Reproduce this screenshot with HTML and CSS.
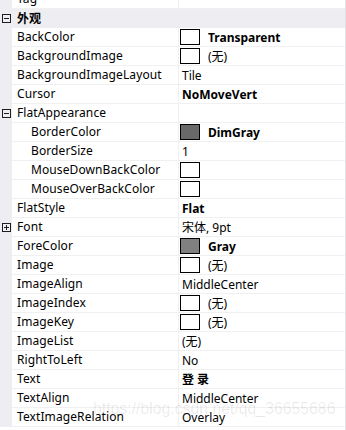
FILE: index.html
```html
<!DOCTYPE html>
<html lang="zh-CN">
<head>
    <meta charset="UTF-8">
    <meta name="viewport" content="width=device-width, initial-scale=1.0">
    <title>属性</title>
    <link rel="stylesheet" href="styles.css">
</head>
<body>
    <div class="grid">
        <div class="row"><span class="gutter"></span><span class="name">Tag</span><span class="value"></span></div>

        <!-- 外观 -->
        <div class="row cat">
            <span class="gutter"><svg class="toggle" viewBox="0 0 9 9"><rect x="0.5" y="0.5" width="8" height="8"/><path d="M2 4.5h5"/></svg></span>
            <span class="name">外观</span>
        </div>
        <div class="row"><span class="gutter"></span><span class="name">BackColor</span><span class="value"><i class="swatch"></i><b>Transparent</b></span></div>
        <div class="row"><span class="gutter"></span><span class="name">BackgroundImage</span><span class="value"><i class="swatch"></i>(无)</span></div>
        <div class="row"><span class="gutter"></span><span class="name">BackgroundImageLayout</span><span class="value">Tile</span></div>
        <div class="row"><span class="gutter"></span><span class="name">Cursor</span><span class="value"><b>NoMoveVert</b></span></div>
        <div class="row">
            <span class="gutter"><svg class="toggle" viewBox="0 0 9 9"><rect x="0.5" y="0.5" width="8" height="8"/><path d="M2 4.5h5"/></svg></span>
            <span class="name">FlatAppearance</span><span class="value"></span>
        </div>
        <div class="row"><span class="gutter"></span><span class="name sub">BorderColor</span><span class="value"><i class="swatch dimgray"></i><b>DimGray</b></span></div>
        <div class="row"><span class="gutter"></span><span class="name sub">BorderSize</span><span class="value">1</span></div>
        <div class="row"><span class="gutter"></span><span class="name sub">MouseDownBackColor</span><span class="value"><i class="swatch"></i></span></div>
        <div class="row"><span class="gutter"></span><span class="name sub">MouseOverBackColor</span><span class="value"><i class="swatch"></i></span></div>
        <div class="row"><span class="gutter"></span><span class="name">FlatStyle</span><span class="value"><b>Flat</b></span></div>
        <div class="row">
            <span class="gutter"><svg class="toggle" viewBox="0 0 9 9"><rect x="0.5" y="0.5" width="8" height="8"/><path d="M2 4.5h5M4.5 2v5"/></svg></span>
            <span class="name">Font</span><span class="value">宋体, 9pt</span>
        </div>
        <div class="row"><span class="gutter"></span><span class="name">ForeColor</span><span class="value"><i class="swatch gray"></i><b>Gray</b></span></div>
        <div class="row"><span class="gutter"></span><span class="name">Image</span><span class="value"><i class="swatch"></i>(无)</span></div>
        <div class="row"><span class="gutter"></span><span class="name">ImageAlign</span><span class="value">MiddleCenter</span></div>
        <div class="row"><span class="gutter"></span><span class="name">ImageIndex</span><span class="value"><i class="swatch"></i>(无)</span></div>
        <div class="row"><span class="gutter"></span><span class="name">ImageKey</span><span class="value"><i class="swatch"></i>(无)</span></div>
        <div class="row"><span class="gutter"></span><span class="name">ImageList</span><span class="value">(无)</span></div>
        <div class="row"><span class="gutter"></span><span class="name">RightToLeft</span><span class="value">No</span></div>
        <div class="row"><span class="gutter"></span><span class="name">Text</span><span class="value"><b>登 录</b></span></div>
        <div class="row"><span class="gutter"></span><span class="name">TextAlign</span><span class="value">MiddleCenter</span></div>
        <div class="row"><span class="gutter"></span><span class="name">TextImageRelation</span><span class="value">Overlay</span></div>
    </div>

    <div class="watermark">https://blog.csdn.net/qq_36655686</div>
</body>
</html>
```

FILE: styles.css
```css
body {
    margin: 0;
    font-family: "Noto Sans", "Noto Sans CJK SC", sans-serif;
    font-size: 12px;
    color: #000;
    background-color: #fff;
    overflow: hidden;
}
.grid {
    width: 345px;
    height: 441px;
    margin-top: -10px;
    border-right: 1px solid #e2e2e6;
}
.row {
    display: flex;
    height: 19px;
}
.gutter {
    flex: none;
    width: 12px;
    background-color: #eeeef2;
    display: flex;
    align-items: center;
    justify-content: center;
}
.toggle {
    width: 9px;
    height: 9px;
    fill: none;
    stroke: #1e1e1e;
    stroke-width: 1;
}
.name {
    flex: none;
    width: 161px;
    padding-left: 5px;
    line-height: 18px;
    letter-spacing: 0.1px;
    border-bottom: 1px solid #f0f0f0;
    white-space: nowrap;
}
.name.sub {
    width: 147px;
    padding-left: 19px;
}
.value {
    flex: 1;
    display: flex;
    align-items: center;
    height: 18px;
    padding-left: 3px;
    border-left: 1px solid #f0f0f0;
    border-bottom: 1px solid #f0f0f0;
    white-space: nowrap;
}
.value b {
    font-weight: bold;
}
.cat {
    background-color: #eeeef2;
}
.cat .name {
    width: auto;
    flex: 1;
    font-weight: bold;
    border-bottom: none;
    line-height: 19px;
}
.swatch {
    flex: none;
    width: 18px;
    height: 14px;
    margin-left: -2px;
    margin-right: 8px;
    border: 1px solid #000;
    background-color: #fff;
}
.swatch.dimgray {
    background-color: #696969;
}
.swatch.gray {
    background-color: #808080;
}
.watermark {
    position: absolute;
    left: 93px;
    top: 400px;
    font-family: "Liberation Sans", Arial, sans-serif;
    font-size: 15.8px;
    color: rgba(0, 0, 0, 0.09);
    white-space: nowrap;
}
```
